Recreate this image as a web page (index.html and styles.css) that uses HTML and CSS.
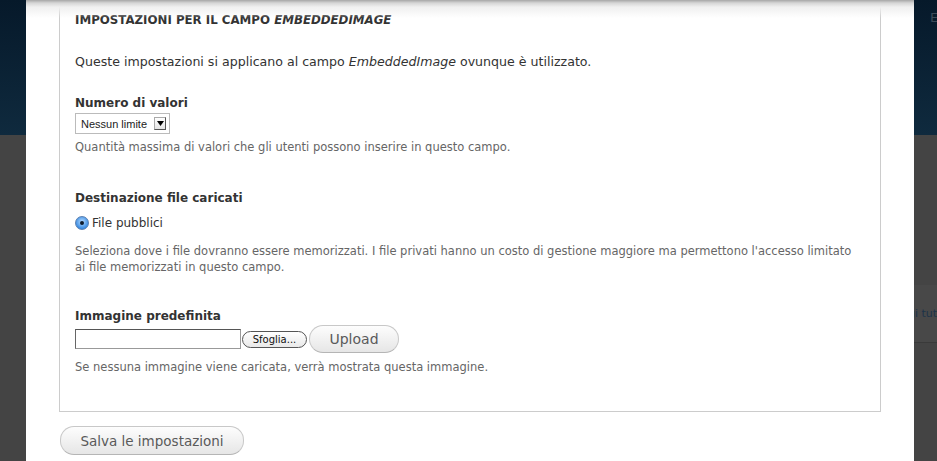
FILE: index.html
```html
<!DOCTYPE html>
<html lang="it">
<head>
<meta charset="utf-8">
<link rel="stylesheet" href="styles.css">
</head>
<body>
<div class="page">
  <div class="side side-left">
    <div class="side-top"></div>
    <div class="side-bottom"></div>
  </div>
  <div class="modal">
    <div class="modal-shadow"></div>
    <div class="fieldset">
      <div class="legend">IMPOSTAZIONI PER IL CAMPO <em>EMBEDDEDIMAGE</em></div>
      <p class="intro">Queste impostazioni si applicano al campo <em>EmbeddedImage</em> ovunque è utilizzato.</p>

      <div class="item item-first">
        <div class="label">Numero di valori</div>
        <div class="select">
          <span class="select-text">Nessun limite</span>
          <span class="select-arrow"><svg width="7" height="5" viewBox="0 0 7 5"><path d="M0 0h7L3.5 5z" fill="#000"/></svg></span>
        </div>
        <div class="desc">Quantità massima di valori che gli utenti possono inserire in questo campo.</div>
      </div>

      <div class="item item-dest">
        <div class="label">Destinazione file caricati</div>
        <div class="radio-row">
          <span class="radio"><span class="radio-dot"></span></span>
          <span class="radio-label">File pubblici</span>
        </div>
        <div class="desc desc-two">Seleziona dove i file dovranno essere memorizzati. I file privati hanno un costo di gestione maggiore ma permettono l'accesso limitato ai file memorizzati in questo campo.</div>
      </div>

      <div class="item item-image">
        <div class="label">Immagine predefinita</div>
        <div class="file-row">
          <span class="file-input"></span>
          <span class="browse">Sfoglia...</span>
          <span class="btn btn-upload">Upload</span>
        </div>
        <div class="desc">Se nessuna immagine viene caricata, verrà mostrata questa immagine.</div>
      </div>
    </div>
    <div class="actions">
      <span class="btn btn-save">Salva le impostazioni</span>
    </div>
  </div>
  <div class="side side-right">
    <div class="side-top"><span class="side-letter">E</span></div>
    <div class="side-bottom">
      <div class="side-gap"></div>
      <div class="side-band"><span class="side-link">gi tut</span></div>
    </div>
  </div>
</div>
</body>
</html>
```

FILE: styles.css
```css
html, body {
  margin: 0;
  padding: 0;
  width: 937px;
  height: 461px;
  overflow: hidden;
  background: #444;
}

.page {
  display: flex;
  width: 937px;
  height: 461px;
  font-family: "DejaVu Sans", Verdana, sans-serif;
  color: #333;
}

.side {
  display: flex;
  flex-direction: column;
  overflow: hidden;
}
.side-left { width: 26px; }
.side-right { width: 23px; }

.side-top {
  height: 135px;
  background: linear-gradient(#06192a, #0f2a3e);
}
.side-bottom {
  flex: 1;
  background: #444;
}
.side-letter {
  display: block;
  padding: 10px 0 0 16px;
  font-size: 13px;
  color: #3c4a58;
}
.side-gap { height: 150px; }
.side-band {
  height: 57px;
  background: #484848;
  border-bottom: 1px solid #3a3a3a;
  display: flex;
  align-items: center;
}
.side-link {
  font-size: 11px;
  color: #1d3348;
  margin-left: -6px;
  white-space: nowrap;
}

.modal {
  width: 888px;
  background: #fff;
  position: relative;
  padding: 4px 0 0 33px;
  box-sizing: border-box;
}
.modal-shadow {
  position: absolute;
  left: 0;
  right: 0;
  top: 0;
  height: 18px;
  background: linear-gradient(#a6a6a6 0, #d6d6d6 3px, #f0f0f0 7px, rgba(255,255,255,0) 18px);
  pointer-events: none;
}

.fieldset {
  width: 822px;
  height: 408px;
  box-sizing: border-box;
  border: 1px solid #ccc;
  padding: 8px 15px 0 15px;
}

.legend {
  font-size: 11.8px;
  font-weight: bold;
  color: #333;
  line-height: 15px;
}
.legend em { font-style: italic; }

.intro {
  margin: 26px 0 0 0;
  font-size: 12.6px;
  line-height: 16px;
}

.label {
  font-size: 12px;
  font-weight: bold;
  line-height: 16px;
}

.item-first { margin-top: 25px; }
.item-dest { margin-top: 35px; }
.item-image { margin-top: 33px; }

.select {
  margin-top: 2px;
  width: 95px;
  height: 21px;
  box-sizing: border-box;
  border: 1px solid #bbb;
  display: flex;
  align-items: center;
  justify-content: space-between;
  padding: 0 3px 0 5px;
  background: #fff;
}
.select-text {
  font-family: "Liberation Sans", Arial, sans-serif;
  font-size: 11px;
  color: #222;
}
.select-arrow {
  width: 12px;
  height: 13px;
  box-sizing: border-box;
  border: 1px solid #aaa;
  border-right-color: #555;
  border-bottom-color: #555;
  background: linear-gradient(#fff, #e4e4e4);
  display: flex;
  align-items: center;
  justify-content: center;
}

.desc {
  margin-top: 5px;
  font-size: 11.5px;
  line-height: 16px;
  color: #666;
}
.desc-two { margin-top: 12px; }

.radio-row {
  margin-top: 9px;
  display: flex;
  align-items: center;
  gap: 3px;
  height: 16px;
}
.radio {
  width: 12px;
  height: 12px;
  border-radius: 50%;
  border: 1px solid #5a7fb0;
  background: radial-gradient(circle at 50% 40%, #b9dcff, #3b8de3 70%, #2a6fc0);
  display: flex;
  align-items: center;
  justify-content: center;
}
.radio-dot {
  width: 4px;
  height: 4px;
  border-radius: 50%;
  background: #0d1a2b;
}
.radio-label {
  font-size: 12px;
  color: #333;
}

.file-row {
  display: flex;
  align-items: center;
  height: 30px;
}
.file-input {
  width: 166px;
  height: 20px;
  box-sizing: border-box;
  border: 1px solid #999;
  border-top-color: #555;
  border-left-color: #666;
  background: #fff;
}
.browse {
  margin-left: 1px;
  margin-top: 1px;
  height: 17px;
  width: 65px;
  box-sizing: border-box;
  border: 1px solid #555;
  border-radius: 9px;
  background: linear-gradient(#fff, #e9e9e9);
  font-size: 10px;
  line-height: 15px;
  text-align: center;
  color: #111;
}

.btn {
  display: inline-flex;
  align-items: center;
  justify-content: center;
  box-sizing: border-box;
  border: 1px solid #c8c8c8;
  border-bottom-color: #b5b5b5;
  border-radius: 14px;
  background: linear-gradient(#fdfdfd, #e6e6e6);
  color: #5a5a5a;
  font-size: 14px;
}
.btn-upload {
  margin-left: 2px;
  width: 90px;
  height: 28px;
}

.actions {
  margin-top: 14px;
  padding-left: 1px;
}
.btn-save {
  width: 184px;
  height: 29px;
  font-size: 13.5px;
}
```
